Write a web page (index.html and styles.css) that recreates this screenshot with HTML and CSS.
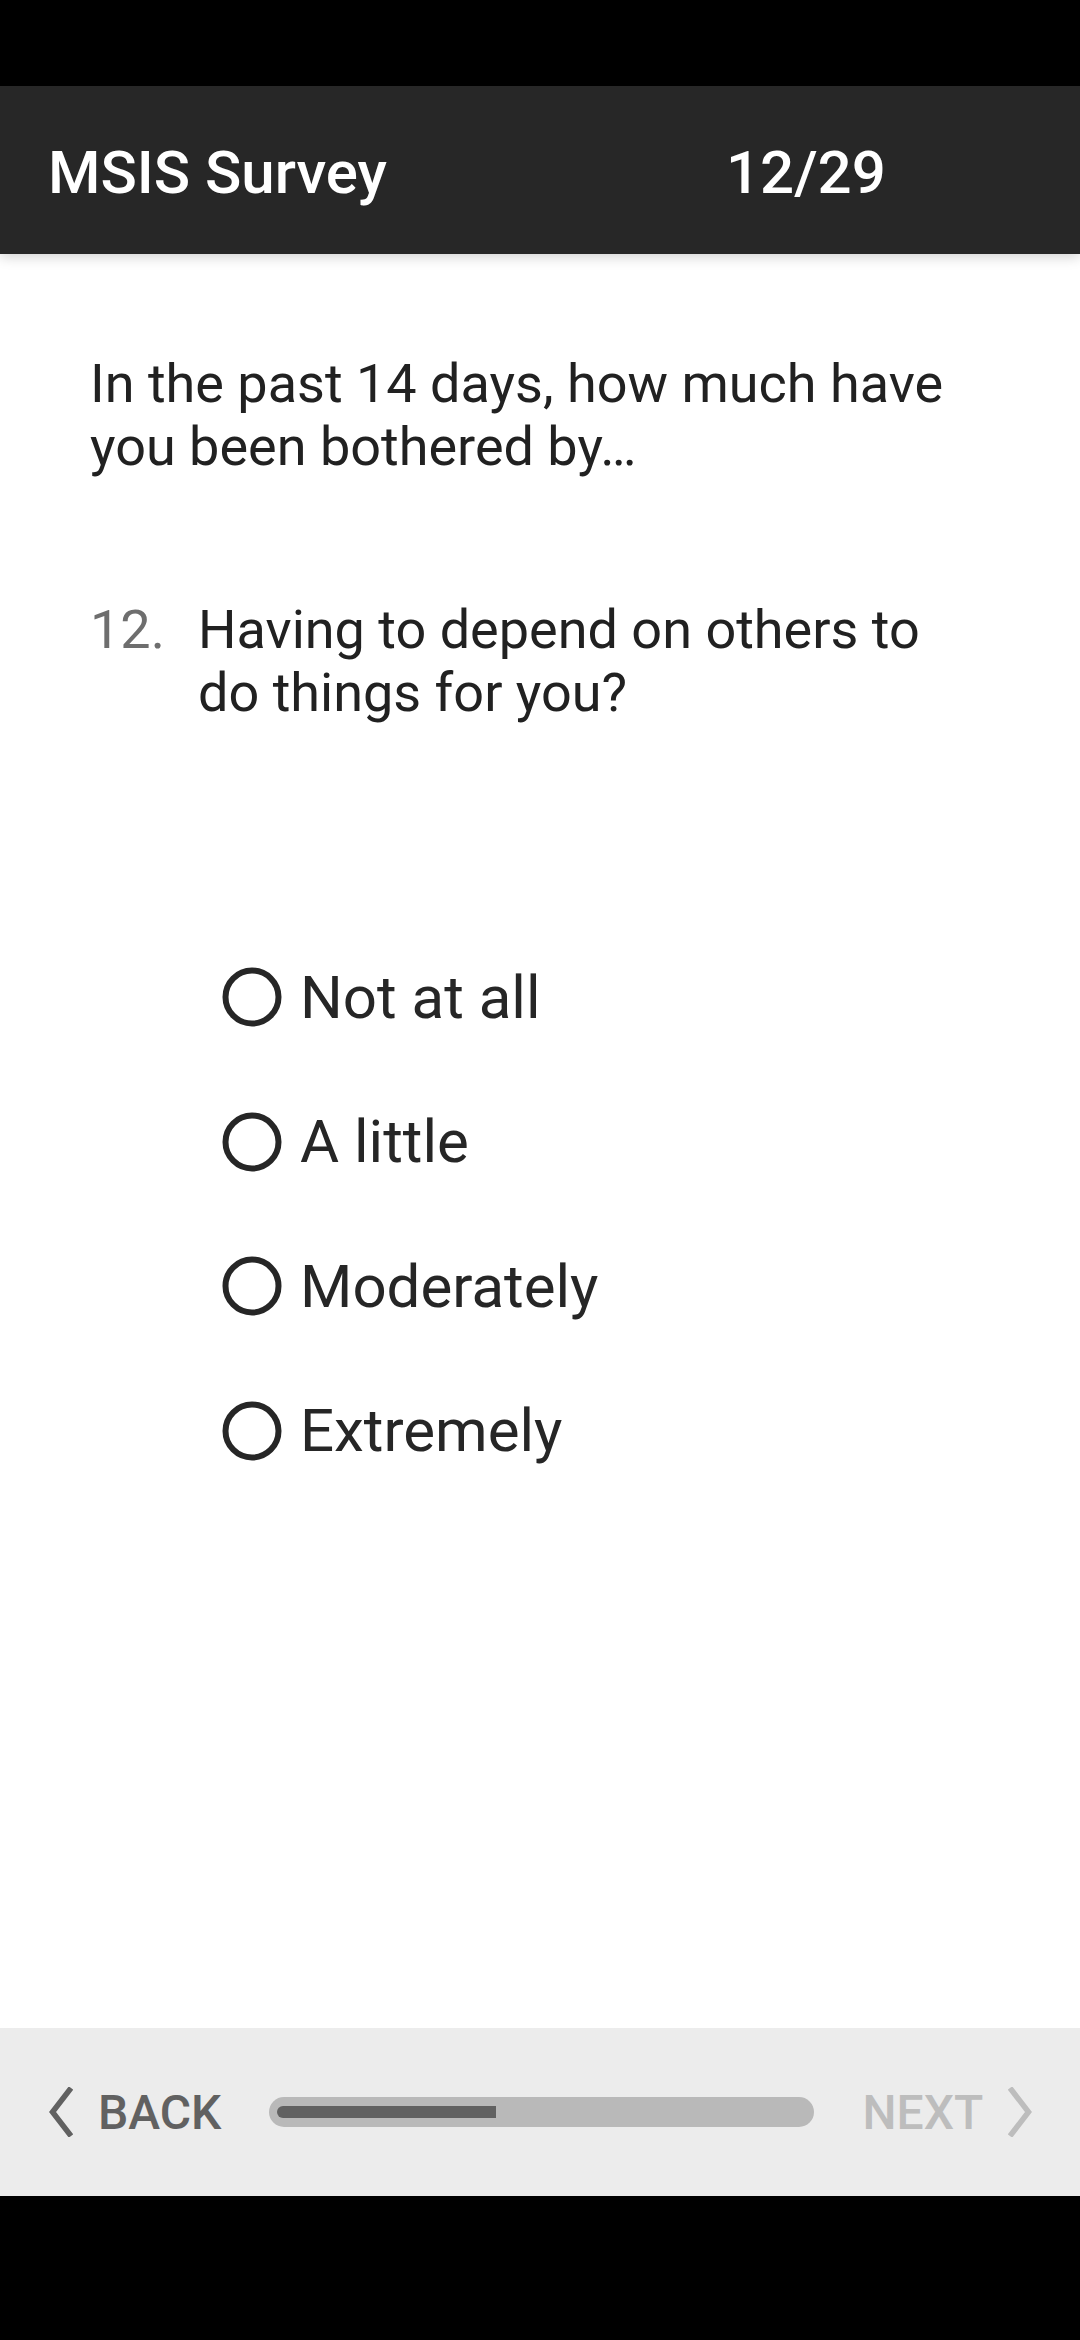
FILE: index.html
```html
<!DOCTYPE html>
<html lang="en">
<head>
<meta charset="utf-8">
<title>MSIS Survey</title>
<link rel="stylesheet" href="styles.css">
</head>
<body>
<div class="screen">
  <div class="status-bar"></div>
  <header class="app-bar">
    <div class="app-title">MSIS Survey</div>
    <div class="app-count">12/29</div>
  </header>
  <main class="content">
    <p class="prompt">In the past 14 days, how much have you been bothered by…</p>
    <div class="question">
      <span class="q-num">12.</span>
      <span class="q-text">Having to depend on others to do things for you?</span>
    </div>
    <div class="options">
      <div class="option">
        <svg class="radio" viewBox="0 0 60 60" width="60" height="60"><circle cx="30" cy="30" r="26.5" fill="none" stroke="#262626" stroke-width="6"/></svg>
        <span class="opt-label">Not at all</span>
      </div>
      <div class="option">
        <svg class="radio" viewBox="0 0 60 60" width="60" height="60"><circle cx="30" cy="30" r="26.5" fill="none" stroke="#262626" stroke-width="6"/></svg>
        <span class="opt-label">A little</span>
      </div>
      <div class="option">
        <svg class="radio" viewBox="0 0 60 60" width="60" height="60"><circle cx="30" cy="30" r="26.5" fill="none" stroke="#262626" stroke-width="6"/></svg>
        <span class="opt-label">Moderately</span>
      </div>
      <div class="option">
        <svg class="radio" viewBox="0 0 60 60" width="60" height="60"><circle cx="30" cy="30" r="26.5" fill="none" stroke="#262626" stroke-width="6"/></svg>
        <span class="opt-label">Extremely</span>
      </div>
    </div>
  </main>
  <footer class="bottom-bar">
    <div class="nav-btn back">
      <svg class="chev" viewBox="0 0 24 50" width="24" height="50"><polyline points="22,1 3.5,25 22,49" fill="none" stroke="#616161" stroke-width="5.5" stroke-linejoin="miter" stroke-miterlimit="10"/></svg>
      <span class="nav-label">BACK</span>
    </div>
    <div class="progress">
      <div class="progress-fill" style="width: 41.4%"></div>
    </div>
    <div class="nav-btn next">
      <span class="nav-label">NEXT</span>
      <svg class="chev" viewBox="0 0 24 50" width="24" height="50"><polyline points="2,1 20.5,25 2,49" fill="none" stroke="#bdbdbd" stroke-width="5.5" stroke-linejoin="miter" stroke-miterlimit="10"/></svg>
    </div>
  </footer>
  <div class="nav-area"></div>
</div>
</body>
</html>
```
FILE: styles.css
```css
* { box-sizing: border-box; }
html, body { margin: 0; padding: 0; }
body {
  width: 1080px;
  height: 2340px;
  background: #000;
  font-family: Roboto, "Noto Sans", "Liberation Sans", sans-serif;
  overflow: hidden;
}
.screen {
  display: flex;
  flex-direction: column;
  width: 1080px;
  height: 2340px;
}
.status-bar {
  height: 86px;
  flex: none;
  background: #000;
}
.app-bar {
  height: 168px;
  flex: none;
  background: #272727;
  display: flex;
  align-items: center;
  padding: 5px 0 0 48px;
  color: #fff;
  font-size: 60px;
  font-weight: 500;
  position: relative;
  z-index: 2;
  box-shadow: 0 3px 12px rgba(0, 0, 0, 0.18);
}
.app-title { width: 678px; }
.content {
  flex: 1;
  background: #fff;
  padding: 98px 0 0 0;
  color: #212121;
}
.prompt {
  margin: 0 0 0 90px;
  width: 880px;
  font-size: 54px;
  line-height: 63.3px;
}
.question {
  display: flex;
  margin: 119px 0 0 90px;
  font-size: 54px;
  line-height: 63.3px;
}
.q-num {
  flex: none;
  width: 108px;
  color: #6e6e6e;
}
.q-text { width: 760px; }
.options {
  margin-top: 201px;
  padding-left: 222px;
  display: flex;
  flex-direction: column;
}
.option {
  height: 144.5px;
  display: flex;
  align-items: center;
}
.radio {
  flex: none;
  display: block;
}
.opt-label {
  margin-left: 18px;
  font-size: 60px;
  color: #262626;
}
.bottom-bar {
  height: 168px;
  flex: none;
  background: #ececec;
  display: flex;
  align-items: center;
}
.nav-btn {
  display: flex;
  align-items: center;
  font-size: 48px;
  font-weight: 500;
}
.nav-btn .chev { display: block; flex: none; }
.back {
  margin-left: 49px;
  color: #616161;
}
.back .nav-label { margin-left: 25px; }
.progress {
  margin-left: 48px;
  width: 545px;
  height: 30px;
  border-radius: 15px;
  background: #b9b9b9;
  padding: 9px 8px;
}
.progress-fill {
  height: 12px;
  background: #616161;
  border-radius: 6px 0 0 6px;
}
.next {
  margin-left: 48px;
  color: #bdbdbd;
}
.next .nav-label { margin-right: 25px; }
.nav-area {
  height: 144px;
  flex: none;
  background: #000;
}
```
